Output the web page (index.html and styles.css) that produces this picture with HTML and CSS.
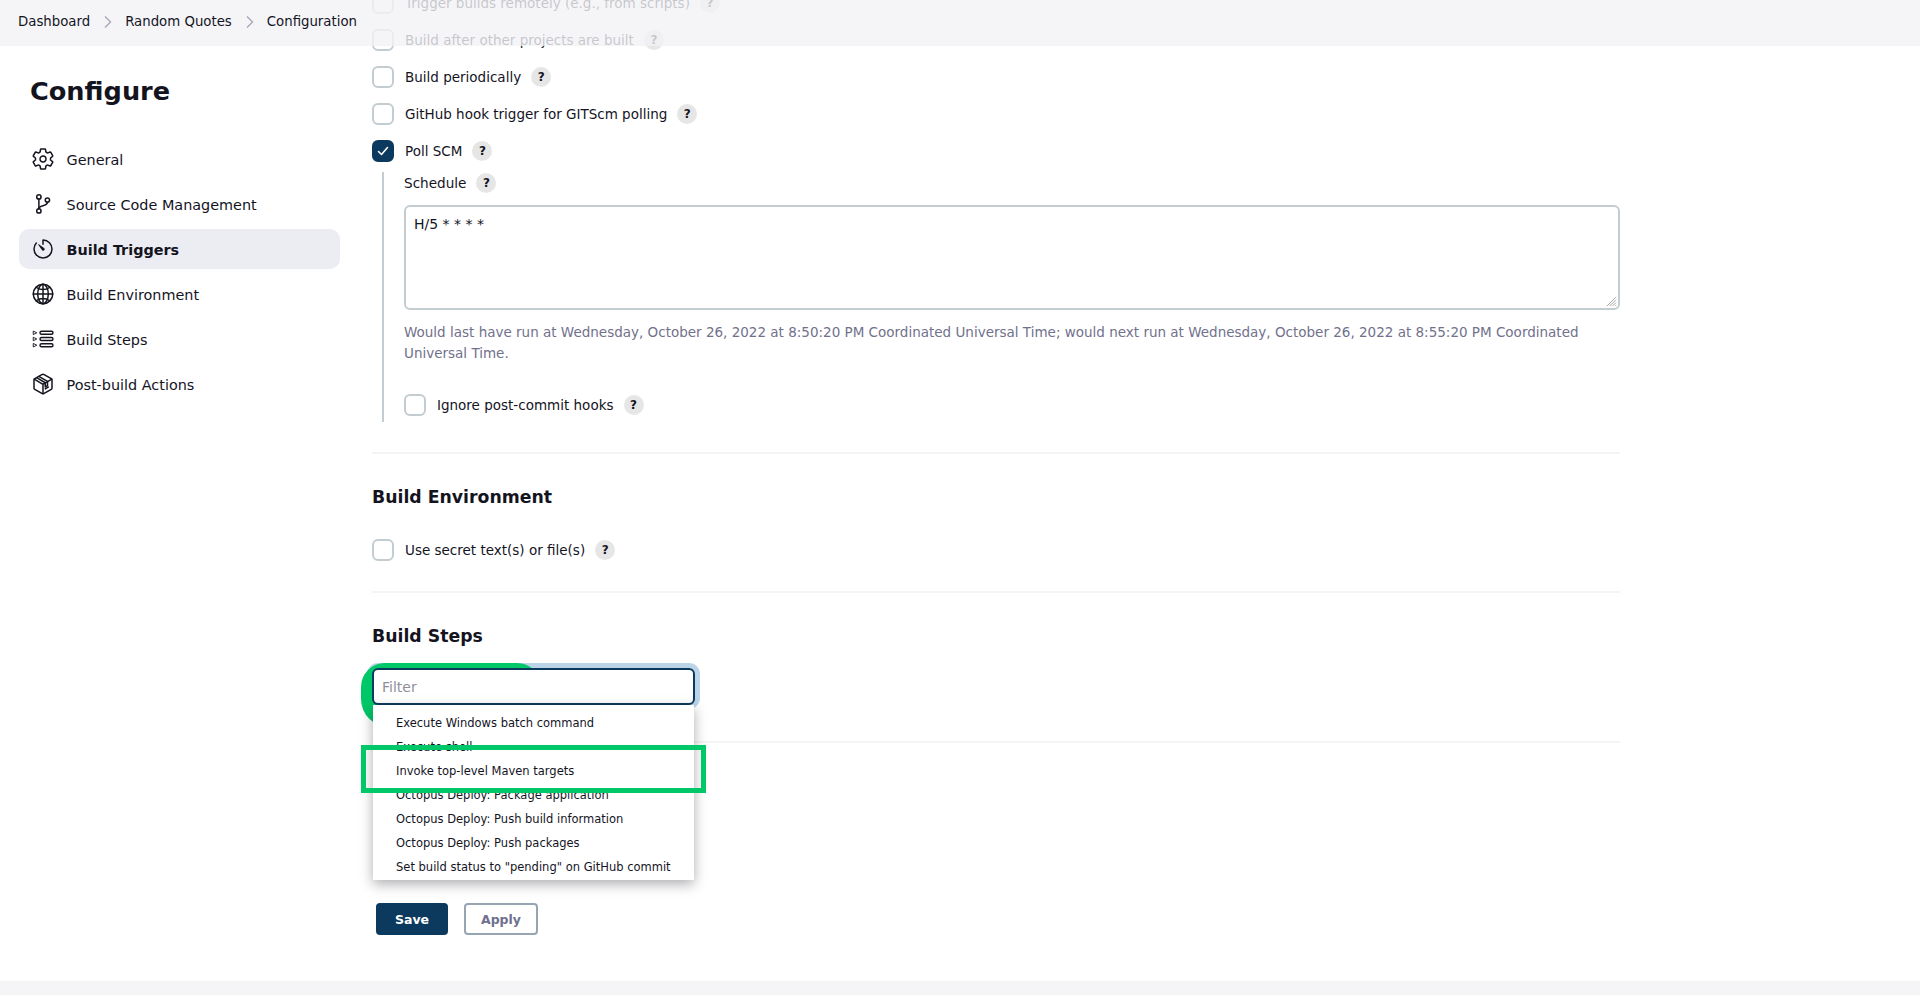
FILE: index.html
```html
<!DOCTYPE html>
<html lang="en">
<head>
<meta charset="utf-8">
<title>Random Quotes Config</title>
<link rel="stylesheet" href="styles.css">
</head>
<body>
<div class="page">
  <nav class="crumbs">
    <span>Dashboard</span>
    <svg class="chev" viewBox="0 0 10 14"><path d="M2 1.5l5.5 5.5-5.5 5.5"/></svg>
    <span>Random Quotes</span>
    <svg class="chev" viewBox="0 0 10 14"><path d="M2 1.5l5.5 5.5-5.5 5.5"/></svg>
    <span>Configuration</span>
  </nav>

  <div class="layout">
    <aside class="side">
      <h1 class="title">Configure</h1>
      <ul class="menu">
        <li class="item">
          <svg class="ico" viewBox="0 0 512 512"><path d="M262.29 192.31a64 64 0 1057.4 57.4 64.13 64.13 0 00-57.4-57.4zM416.39 256a154.34 154.34 0 01-1.53 20.79l45.21 35.46a10.81 10.81 0 012.45 13.75l-42.77 74a10.81 10.81 0 01-13.14 4.59l-44.9-18.08a16.11 16.11 0 00-15.17 1.75A164.48 164.48 0 01325 400.8a15.94 15.94 0 00-8.82 12.14l-6.73 47.89a11.08 11.08 0 01-10.68 9.17h-85.54a11.11 11.11 0 01-10.69-8.87l-6.72-47.82a16.07 16.07 0 00-9-12.22 155.3 155.3 0 01-21.46-12.57 16 16 0 00-15.11-1.71l-44.89 18.07a10.81 10.81 0 01-13.14-4.58l-42.77-74a10.8 10.8 0 012.45-13.75l38.21-30a16.05 16.05 0 006-14.08c-.36-4.17-.58-8.33-.58-12.5s.21-8.27.58-12.35a16 16 0 00-6.07-13.94l-38.19-30A10.81 10.81 0 0149.48 186l42.77-74a10.81 10.81 0 0113.14-4.59l44.9 18.08a16.11 16.11 0 0015.17-1.75A164.48 164.48 0 01187 111.2a15.94 15.94 0 008.82-12.14l6.73-47.89A11.08 11.08 0 01213.23 42h85.54a11.11 11.11 0 0110.69 8.87l6.72 47.82a16.07 16.07 0 009 12.22 155.3 155.3 0 0121.46 12.57 16 16 0 0015.11 1.71l44.89-18.07a10.81 10.81 0 0113.14 4.58l42.77 74a10.8 10.8 0 01-2.45 13.75l-38.21 30a16.05 16.05 0 00-6.05 14.08c.33 4.14.55 8.3.55 12.47z"/></svg>
          <span>General</span>
        </li>
        <li class="item">
          <svg class="ico" viewBox="0 0 512 512"><circle cx="168" cy="104" r="46"/><circle cx="168" cy="404" r="46"/><path d="M168 358V150"/><circle cx="350" cy="172" r="46"/><path d="M350 218c0 100-182 50-182 140"/></svg>
          <span>Source Code Management</span>
        </li>
        <li class="item active">
          <svg class="ico" viewBox="0 0 512 512"><path d="M112.91 128A191.85 191.85 0 0064 254c-1.18 106.35 85.65 193.8 192 194 106.2.2 192-85.83 192-192 0-104.54-83.55-189.61-187.5-192a4.36 4.36 0 00-4.5 4.37V152"/><path d="M233.38 278.63l-79-113a8.13 8.13 0 0111.32-11.32l113 79a32.5 32.5 0 01-37.25 53.26 33.21 33.21 0 01-8.07-7.94z" class="solid"/></svg>
          <span>Build Triggers</span>
        </li>
        <li class="item">
          <svg class="ico" viewBox="0 0 512 512"><path d="M256 48C141.13 48 48 141.13 48 256s93.13 208 208 208 208-93.13 208-208S370.87 48 256 48z"/><path d="M256 48c-58.07 0-112.67 93.31-112.67 208S197.93 464 256 464s112.67-93.31 112.67-208S314.07 48 256 48z"/><path d="M117.33 117.33c38.24 27.15 86.38 43.34 138.67 43.34s100.43-16.19 138.67-43.34M394.67 394.67c-38.24-27.15-86.38-43.34-138.67-43.34s-100.43 16.19-138.67 43.34M256 48v416M464 256H48"/></svg>
          <span>Build Environment</span>
        </li>
        <li class="item">
          <svg class="ico" viewBox="0 0 24 24"><rect x="9" y="4.2" width="13" height="3" rx="1.5"/><rect x="9" y="10.5" width="13" height="3" rx="1.5"/><rect x="9" y="16.8" width="13" height="3" rx="1.5"/><path d="M2.6 4.2l3.2 1.6-3.2 1.6zM2.6 10.4l3.2 1.6-3.2 1.6zM2.6 16.6l3.2 1.6-3.2 1.6z" class="thin"/></svg>
          <span>Build Steps</span>
        </li>
        <li class="item">
          <svg class="ico" viewBox="0 0 512 512"><path d="M448 341.37V170.61A32 32 0 00432.11 143l-152-88.46a47.94 47.94 0 00-48.24 0L79.89 143A32 32 0 0064 170.61v170.76A32 32 0 0079.89 369l152 88.46a48 48 0 0048.24 0l152-88.46A32 32 0 00448 341.37z"/><path d="M69 153.99l187 110 187-110M256 463.99v-200"/><path d="M176 98l176 104v90l-48 27v-90L128 125M304 360l64-38"/></svg>
          <span>Post-build Actions</span>
        </li>
      </ul>
    </aside>

    <main class="content">
      <div class="opt"><span class="box"></span><span>Trigger builds remotely (e.g., from scripts)</span><span class="help">?</span></div>
      <div class="opt"><span class="box"></span><span>Build after other projects are built</span><span class="help">?</span></div>
      <div class="opt"><span class="box"></span><span>Build periodically</span><span class="help">?</span></div>
      <div class="opt"><span class="box"></span><span>GitHub hook trigger for GITScm polling</span><span class="help">?</span></div>
      <div class="opt"><span class="box checked"><svg viewBox="0 0 22 22"><path d="M6.5 11.5l3 3 6-7"/></svg></span><span>Poll SCM</span><span class="help">?</span></div>

      <section class="nested">
        <div class="label"><span>Schedule</span><span class="help">?</span></div>
        <div class="area">H/5 * * * *<svg class="grip" viewBox="0 0 12 12"><path d="M11 1L1 11M11 4L4 11M11 7L7 11M11 10L10 11"/></svg></div>
        <p class="hint">Would last have run at Wednesday, October 26, 2022 at 8:50:20 PM Coordinated Universal Time; would next run at Wednesday, October 26, 2022 at 8:55:20 PM Coordinated Universal Time.</p>
        <div class="opt ignore"><span class="box"></span><span>Ignore post-commit hooks</span><span class="help">?</span></div>
      </section>

      <hr class="rule first">
      <h2 class="head">Build Environment</h2>
      <div class="opt env"><span class="box"></span><span>Use secret text(s) or file(s)</span><span class="help">?</span></div>
      <hr class="rule second">
      <h2 class="head">Build Steps</h2>

      <div class="adder">
        <div class="halo"></div>
        <div class="greenarc"></div>
        <div class="filter">Filter</div>
        <ul class="drop">
          <li>Execute Windows batch command</li>
          <li>Execute shell</li>
          <li>Invoke top-level Maven targets</li>
          <li>Octopus Deploy: Package application</li>
          <li>Octopus Deploy: Push build information</li>
          <li>Octopus Deploy: Push packages</li>
          <li>Set build status to "pending" on GitHub commit</li>
        </ul>
        <div class="mark"></div>
      </div>
      <hr class="rule third">
      <div class="actions">
        <span class="btn save">Save</span>
        <span class="btn apply">Apply</span>
      </div>
    </main>
  </div>
  <footer class="foot"></footer>
</div>
</body>
</html>
```

FILE: styles.css
```css
* { box-sizing: border-box; }
html, body { margin: 0; height: 995px; overflow: hidden; background: #fff; }
body { font-family: "DejaVu Sans", sans-serif; font-size: 13.5px; color: #14141f; }
.page { position: relative; height: 995px; overflow: hidden; display: flex; flex-direction: column; }

.crumbs { position: absolute; top: 0; left: 0; right: 0; height: 46px; z-index: 5; display: flex; align-items: center; padding: 0 0 2px 18px; background: rgba(243,243,246,.8); font-size: 13.3px; line-height: 44px; }
.chev { width: 10px; height: 14px; margin: 0 12px 0 13px; fill: none; stroke: #a8a8bc; stroke-width: 1.4; }

.layout { flex: 1; display: flex; min-height: 0; }
.side { width: 372px; flex: none; padding: 0 0 0 19px; }
.title { margin: 76px 0 0 11px; font-size: 25.6px; line-height: 30px; font-weight: 700; }
.menu { list-style: none; margin: 33px 0 0; padding: 0; width: 321px; display: flex; flex-direction: column; gap: 5px; font-size: 14.4px; }
.item { height: 40px; display: flex; align-items: center; padding-left: 12px; gap: 11.5px; border-radius: 10px; }
.item span { padding-top: 1px; }
.item.active { background: #ecedf2; font-weight: 700; }
.ico { width: 24px; height: 24px; flex: none; fill: none; stroke: #14141f; stroke-width: 32; stroke-linecap: round; stroke-linejoin: round; }
.ico rect { stroke-width: 1.4; }
.ico .thin { stroke-width: .9; }
.ico .solid { fill: #14141f; stroke: none; }

.content { width: 1248px; flex: none; margin-top: -8px; }
.opt { display: flex; align-items: center; height: 22px; margin-bottom: 15px; }
.box { width: 22px; height: 22px; border: 2px solid #c3ccd1; border-radius: 6px; background: #fff; margin-right: 11px; flex: none; display: flex; }
.box.checked { background: #0b3a5e; border-color: #0b3a5e; }
.box.checked svg { width: 22px; height: 22px; margin: -2px; fill: none; stroke: #fff; stroke-width: 1.6; stroke-linecap: round; stroke-linejoin: round; }
.help { width: 20px; height: 20px; border-radius: 50%; background: #e6e6e6; margin-left: 10px; font-size: 12px; font-weight: 700; display: flex; align-items: center; justify-content: center; flex: none; }

.nested { margin: -5px 0 0 10px; border-left: 2px solid #c3ccd1; padding-left: 20px; height: 250px; }
.label { display: flex; align-items: center; height: 22px; font-size: 13.6px; }
.area { position: relative; margin-top: 11px; height: 105px; border: 2px solid #c3ccd1; border-radius: 6px; padding: 8px; font-size: 14px; line-height: 1.3; }
.grip { position: absolute; right: 1px; bottom: 1px; width: 11px; height: 11px; fill: none; stroke: #777; stroke-width: .7; }
.hint { margin: 12px 0 0; color: #71718c; line-height: 21px; }
.opt.ignore { margin: 30px 0 0; }

.rule { border: 0; height: 2px; background: #f4f4f7; margin: 0; }
.rule.first { margin-top: 30px; }
.head { margin: 33px 0 0; font-size: 17.3px; line-height: 20px; font-weight: 700; }
.opt.env { margin: 32px 0 0; }
.rule.second { margin-top: 30px; }

.adder { position: relative; margin-top: 22px; width: 323px; height: 37px; }
.filter { position: relative; height: 37px; border: 2px solid #0b3a5e; border-radius: 6px; background: #fff; color: #8f8f9c; padding: 0 8px; font-size: 14px; line-height: 35px; }
.halo { position: absolute; inset: -5px -5px -4px -5px; background: #bcd4e8; border-radius: 11px; }
.greenarc { position: absolute; left: -11px; top: -5px; width: 180px; height: 64px; background: #00c868; border-radius: 24px 24px 24px 28px; }
.drop { position: absolute; left: 1px; top: 37px; width: 321px; height: 175px; margin: 0; padding: 6px 0 0; list-style: none; background: #fff; font-size: 11.5px; box-shadow: 0 4px 12px rgba(20,20,31,.35); z-index: 2; }
.drop li { height: 24px; line-height: 24px; padding-left: 23px; }
.mark { position: absolute; left: -11px; top: 77px; width: 345px; height: 48px; border: 5px solid #00c868; z-index: 3; }

.rule.third { margin-top: 36px; }
.actions { display: flex; gap: 16px; margin: 160px 0 0 4px; position: relative; z-index: 1; }
.btn { height: 32px; border-radius: 4px; font-size: 12.5px; font-weight: 700; display: flex; align-items: center; justify-content: center; }
.save { width: 72px; background: #0b3a5e; color: #fff; }
.apply { width: 74px; border: 2px solid #97a5b3; color: #6f6f8f; }

.foot { height: 14px; flex: none; background: #f5f5f8; }
```
